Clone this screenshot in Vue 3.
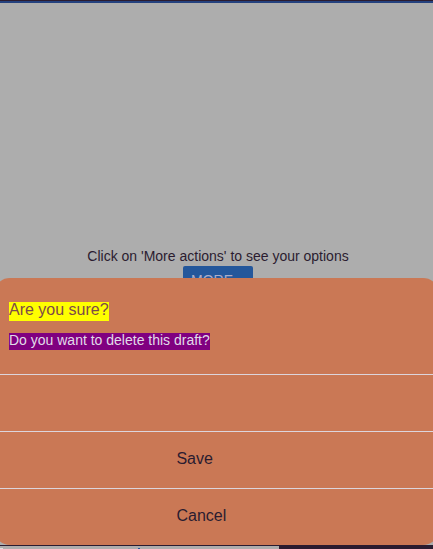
<script setup>
const actions = [
  { id: 'delete', label: '' },
  { id: 'save', label: 'Save' },
  { id: 'cancel', label: 'Cancel' },
]
</script>

<template>
  <div class="screen">
    <main class="page">
      <p class="hint">Click on 'More actions' to see your options</p>
      <button class="more" type="button">MORE...</button>
    </main>
    <footer class="tabs">
      <div class="tab"><i class="light"></i><i class="mark"></i></div>
    </footer>
    <section class="sheet" role="dialog" aria-labelledby="sheet-title">
      <header class="head">
        <h1 id="sheet-title" class="title">Are you sure?</h1>
        <p class="message">Do you want to delete this draft?</p>
      </header>
      <button v-for="a in actions" :key="a.id" class="action" type="button" :aria-label="a.label || 'Delete'">
        {{ a.label }}
      </button>
    </section>
  </div>
</template>

<style>
body {
  margin: 0;
}
</style>

<style scoped>
.screen {
  position: relative;
  display: flex;
  flex-direction: column;
  box-sizing: border-box;
  min-height: 100vh;
  overflow: hidden;
  border-top: 1px solid #2b1c30;
  background: #adadad;
  color: #2b1c30;
  font-family: "Liberation Sans", Arial, sans-serif;
}
.page {
  flex: 1;
  display: flex;
  flex-direction: column;
  align-items: center;
  justify-content: center;
  border-top: 2px solid #24417e;
  padding: 0 0 8px 3px;
}
.hint {
  margin: 0;
  font-size: 14px;
  line-height: 20px;
}
.more {
  width: 70px;
  height: 28px;
  padding: 0 8px;
  border: 0;
  border-radius: 2px;
  background: #24579b;
  color: #adadc8;
  font: 14px/28px "Liberation Sans", Arial, sans-serif;
  text-align: left;
}
.tabs {
  border-top: 1px solid #2b1c30;
  background: #2b1c30;
}
.tab {
  display: flex;
  align-items: flex-end;
  justify-content: space-between;
  width: 64.5%;
  height: 3px;
  background: #adadad;
}
.light {
  width: 3px;
  height: 1px;
  background: #e0e0e0;
}
.mark {
  width: 50%;
  height: 1px;
  border-left: 2px solid #24579b;
}
.sheet {
  position: absolute;
  right: -6px;
  bottom: 4px;
  left: -6px;
  overflow: hidden;
  border-radius: 16px;
  background: #ca7855;
}
.head {
  display: flex;
  flex-direction: column;
  align-items: flex-start;
  gap: 12px;
  padding: 24px 15px;
}
.title,
.message {
  margin: 0;
  font-weight: 400;
}
.title {
  padding-bottom: 3px;
  background: #ffff00;
  color: #7d4a48;
  font-size: 16px;
  line-height: 16px;
}
.message {
  padding-bottom: 2px;
  background: #800080;
  color: #e0dce8;
  font-size: 14px;
  line-height: 15px;
}
.action {
  display: block;
  width: 100%;
  height: 57px;
  padding: 0 0 2px 41%;
  border: 0;
  border-top: 1px solid #dcd5dc;
  background: transparent;
  color: #2b1c30;
  font: 16px/20px "Liberation Sans", Arial, sans-serif;
  text-align: left;
}
</style>
